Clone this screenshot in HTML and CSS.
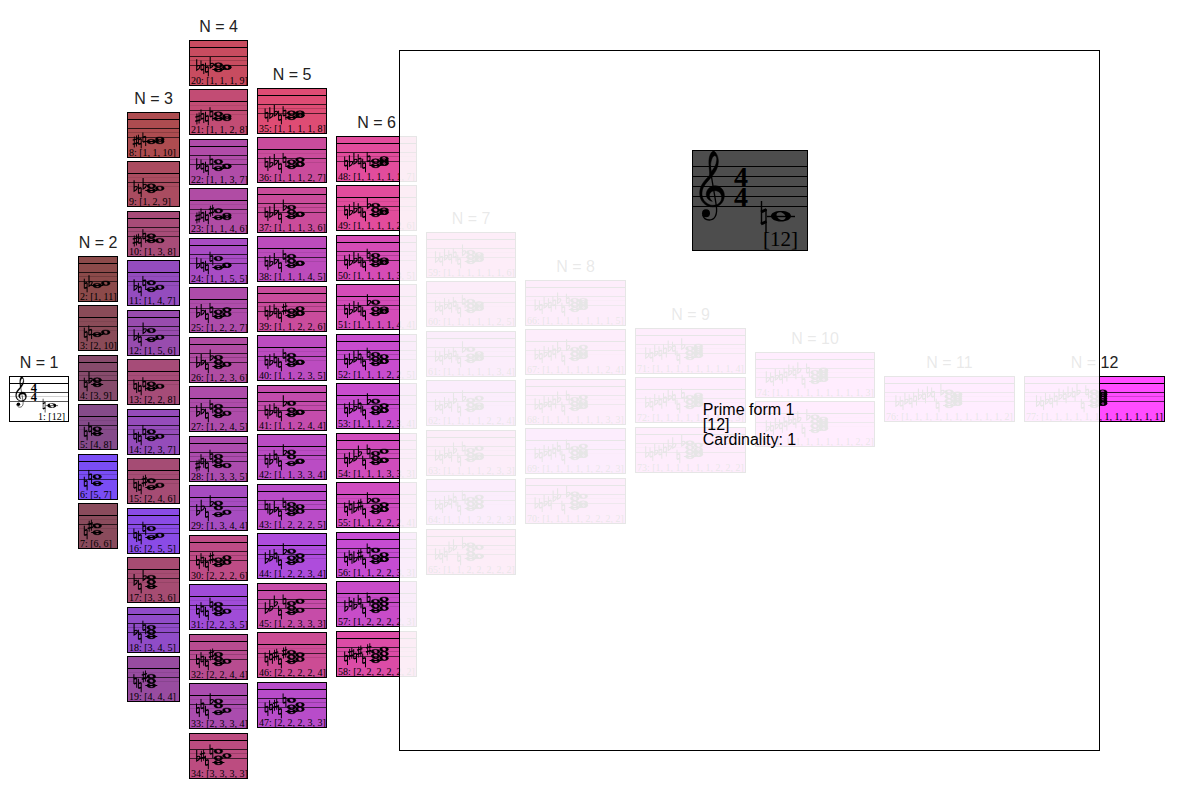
FILE: index.html
```html
<!DOCTYPE html>
<html lang="en">
<head>
<meta charset="utf-8">
<title>Prime forms by cardinality</title>
<link rel="stylesheet" href="styles.css">
</head>
<body>
<svg class="defs" aria-hidden="true">
  <symbol id="flat" viewBox="-3 -9 6 13" overflow="visible">
    <path d="M-1.2-8V3C1 1.8 2 .8 2-.6 2-2.2 0-2.2-1.2-.6" fill="none" stroke="#000" stroke-width="1.1"/>
  </symbol>
  <symbol id="natural" viewBox="-3 -7 6 14" overflow="visible">
    <path d="M-1.4-6.8V2.8M1.4-2.8V6.800" fill="none" stroke="#000" stroke-width="1"/>
    <path d="M-1.4-2.1 1.4-2.8M-1.4 2.8 1.4 2.1" fill="none" stroke="#000" stroke-width="1.500"/>
  </symbol>
  <symbol id="sharp" viewBox="-3 -7 6 14" overflow="visible">
    <path d="M-1-5V6M1.2-6V5" fill="none" stroke="#000" stroke-width=".9"/>
    <path d="M-2.6-1.4 2.8-2.9M-2.6 2.8 2.8 1.3" fill="none" stroke="#000" stroke-width="1.5"/>
  </symbol>
  <symbol id="whole" viewBox="-4 -3 8 6" overflow="visible">
    <path fill-rule="evenodd" stroke="#000" stroke-width=".4" d="M-4.4 0C-4.4-1.5-2.4-2.3 0-2.3S4.4-1.5 4.4 0 2.4 2.3 0 2.3-4.4 1.5-4.4 0ZM-1.9-.5C-1.7.9-.6 1.8.5 1.7 1.7 1.6 2.1.7 1.9-.2 1.6-1.3.6-1.9-.5-1.7-1.5-1.5-2-.9-1.9-.5Z"/>
  </symbol>
  <symbol id="opening" viewBox="0 0 116 101" overflow="visible">
    <g transform="translate(1 0) scale(.3333)">
      <path fill-rule="evenodd" stroke="#000" stroke-width="1.500" d="M48 45C46 20 54 4 62 3 70 6 77 22 76 36 75 60 60 76 46 92 32 107 26 118 27 134 28 152 44 166 60 166 76 166 86 156 86 142 86 130 76 122 66 122 52 122 47 134 50 142 51 148 55 152 58 154 46 152 38 140 40 130 42 116 54 107 66 107 84 107 95 122 94 138 93 157 80 171 60 171 38 171 20 154 20 130 20 108 32 94 48 78 51 75 49 58 48 45ZM54 65C50 42 56 20 64 17 70 16 72 24 71 31 70 45 63 56 54 65Z"/>
      <path d="M51 45C54 80 63 120 70 168 74 196 64 210 49 210 38 210 31 204 29 194" fill="none" stroke="#000" stroke-width="4"/>
      <circle cx="39" cy="190" r="12"/>
    </g>
    <text class="meter" x="49" y="36" text-anchor="middle">4</text>
    <text class="meter" x="49" y="56" text-anchor="middle">4</text>
    <path d="M69.500 51V74M74 59V82" fill="none" stroke="#000" stroke-width="1.400"/>
    <path d="M69 62 74.500 59.500M69 74 74.500 71.500" fill="none" stroke="#000" stroke-width="3"/>
    <path d="M75 66.500H103" stroke="#000" stroke-width="1.400"/>
    <path fill-rule="evenodd" d="M79 66C79 63 83 61 89 61S99 63 99 66 95 71.500 89 71.500 79 69 79 66ZM84.500 65C85 68 88 70 90 70 93 70 94 68 93.500 66.500 93 64 90 62.300 88 62.300 85.500 62.300 84.500 63.600 84.500 65Z"/>
  </symbol>
</svg>

<main class="board" id="board"></main>

<aside class="detail" aria-label="Selected prime form">
  <figure class="preview">
    <svg class="preview-score" viewBox="0 0 114 99" aria-hidden="true">
      <g transform="translate(-1 -1)">
        <path d="M0 16.500H116M0 26.500H116M0 36.500H116M0 46.500H116M0 56.500H116" stroke="#000"/>
        <use href="#opening" width="116" height="101"/>
        <text class="preview-label" x="71" y="96">[12]</text>
      </g>
    </svg>
  </figure>
  <p class="info">Prime form 1<br>[12]<br>Cardinality: 1</p>
</aside>
<script src="board.js"></script>
</body>
</html>
```
FILE: styles.css
```css
body {
  margin: 0;
  background: #fff;
  color: #000;
  font: 16px/18px "Liberation Sans", Arial, sans-serif;
}

.defs {
  position: absolute;
  width: 0;
  height: 0;
}

.board {
  display: flex;
  align-items: flex-start;
  gap: 9px;
  padding: 18px 9px;
}

.column {
  flex: none;
}

.column-title {
  margin: 0 0 4px;
  font-size: 16px;
  font-weight: 400;
  line-height: 18px;
  text-align: center;
  white-space: nowrap;
  color: #222;
}

.card {
  box-sizing: border-box;
  height: 46px;
  margin: 0 0 3px;
  border: 1px solid #000;
  overflow: hidden;
}

.card:nth-of-type(even) {
  margin-bottom: 4px;
}

.score {
  display: block;
  width: 100%;
  height: 34px;
  overflow: visible;
}

.label {
  padding-left: 1px;
  font: 10px/11px "Liberation Serif", "Times New Roman", serif;
  white-space: nowrap;
}

.card-first .label {
  padding-right: 3px;
  text-align: right;
}

.meter {
  font: bold 28px "Liberation Serif", "Times New Roman", serif;
}

.detail {
  position: absolute;
  top: 50px;
  left: 399px;
  box-sizing: border-box;
  display: flex;
  flex-direction: column;
  align-items: center;
  gap: 151px;
  width: 701px;
  height: 701px;
  padding-top: 99px;
  border: 1px solid #000;
  background: rgba(255, 255, 255, 0.9);
}

.preview {
  margin: 0;
  border: 1px solid #000;
  background: #4d4d4d;
}

.preview-score {
  display: block;
  width: 114px;
  height: 99px;
}

.preview-label {
  font: 21px "Liberation Serif", "Times New Roman", serif;
}

.info {
  margin: 0;
  line-height: 15px;
}
```
FILE: board.js
```js
// One line per card: intervals | accidentals from left to right | colour
const columns = [
  { width: 60, cards: ["12||#fff"] },
  { width: 40, cards: [
    "1 11|C Db|#8c4a4a", "2 10|C D|#8a4b58", "3 9|C Eb|#874b6c",
    "4 8|C E|#854b8a", "5 7|C F|#7a4df5", "6 6|C F#|#8a4b5c"] },
  { width: 53, cards: [
    "1 1 10|C# C D|#ad4c50", "1 2 9|Db C Eb|#aa4c60", "1 3 8|C# C E|#a84c78",
    "1 4 7|Db C F|#944cbe", "1 5 6|Db C Gb|#984cae", "2 2 8|D C E|#a64c78",
    "2 3 7|D C F|#954cba", "2 4 6|D C F#|#a54c74", "2 5 5|D C G|#8a4be6",
    "3 3 6|Eb C Gb|#a64c72", "3 4 5|Eb C G|#904cc8", "4 4 4|E C G#|#984ca0"] },
  { width: 59, cards: [
    "1 1 1 9|Db D C Eb|#c84c60", "1 1 2 8|C# D C E|#c24c74", "1 1 3 7|Db D C F|#b04ca8",
    "1 1 4 6|C# D C F#|#b04ca4", "1 1 5 5|Db D C G|#a84cc4", "1 2 2 7|Db Eb C F|#ae4caa",
    "1 2 3 6|Db Eb C Gb|#b04ca2", "1 2 4 5|Db Eb C G|#ae4caa", "1 3 3 5|C# E C G|#ac4cae",
    "1 3 4 4|Db Fb C Ab|#a64cc0", "2 2 2 6|D E C F#|#be4c86", "2 2 3 5|D E C G|#a04cd8",
    "2 2 4 4|D E C G#|#b84c90", "2 3 3 4|D F C Ab|#aa4cae", "3 3 3 3|Eb F# C A|#bc4c80"] },
  { width: 70, cards: [
    "1 1 1 1 8|D Db Eb C E|#de4c74", "1 1 1 2 7|D Db Eb C F|#ca4c9c", "1 1 1 3 6|D Db Eb C Gb|#ca4c9a",
    "1 1 1 4 5|D Db Eb C G|#bc4cbc", "1 1 2 2 6|D Db E C F#|#ca4c9c", "1 1 2 3 5|D Db E C G|#bc4cc0",
    "1 1 2 4 4|D Db E C Ab|#c44cac", "1 1 3 3 4|D Db F C Ab|#ba4cc4", "1 2 2 2 5|F Db Eb C G|#ba4cc8",
    "1 2 2 3 4|Db Eb F C Ab|#ae4cdc", "1 2 3 3 3|Db Eb Gb C A|#c64ca8", "2 2 2 2 4|D E F# C G#|#cc4c94",
    "2 2 2 3 3|D E F# C A|#b84cca"] },
  { width: 81, cards: [
    "1 1 1 1 1 7|D Db Eb E C F|#e24c9c", "1 1 1 1 2 6|D Db Eb E C Gb|#e24c9c",
    "1 1 1 1 3 5|D Db Eb E C G|#d64cb6", "1 1 1 1 4 4|D Db Eb E C Ab|#d44cb8",
    "1 1 1 2 2 5|D Db Eb F C G|#c84cce", "1 1 1 2 3 4|D Db Eb F C Ab|#c84cce",
    "1 1 1 3 3 3|D Db Eb Gb C A|#d04cbc", "1 1 2 2 2 4|D E Db F# C Ab|#d04cc0",
    "1 1 2 2 3 3|D E Db F# C A|#c64cd2", "1 2 2 2 2 3|Db F Eb G C A|#c84cc8",
    "2 2 2 2 2 2|D F# E G# C A#|#dc4ca6"] },
  { width: 90, cards: [
    "1 1 1 1 1 1 6||#e64cb8", "1 1 1 1 1 2 5||#e04cc0", "1 1 1 1 1 3 4||#d84cd0",
    "1 1 1 1 2 2 4||#d44cdc", "1 1 1 1 2 3 3||#e04cc4", "1 1 1 2 2 2 3||#d44ce0",
    "1 1 2 2 2 2 2||#e44cb8"] },
  { width: 101, cards: [
    "1 1 1 1 1 1 1 5||#ec4cd0", "1 1 1 1 1 1 2 4||#ec4cd0", "1 1 1 1 1 1 3 3||#ec4cd0",
    "1 1 1 1 1 2 2 3||#dc4ce4", "1 1 1 1 2 2 2 2||#ec4cd0"] },
  { width: 111, cards: [
    "1 1 1 1 1 1 1 1 4||#f44ce0", "1 1 1 1 1 1 1 2 3||#f04ce4", "1 1 1 1 1 1 2 2 2||#f44ce0"] },
  { width: 120, cards: ["1 1 1 1 1 1 1 1 1 3||#ff4cf0", "1 1 1 1 1 1 1 1 2 2||#ff4cf0"] },
  { width: 131, cards: ["1 1 1 1 1 1 1 1 1 1 2||#ff4cf8"] },
  { width: 141, cards: ["1 1 1 1 1 1 1 1 1 1 1 1||#ff4cff"] }
];

const flatNames = ["C", "Db", "D", "Eb", "E", "F", "Gb", "G", "Ab", "A", "Bb", "B"];
const stepOf = name => "CDEFGAB".indexOf(name[0]);
const heightOf = name => 28.5 - 2.25 * stepOf(name);

function spell(intervals) {
  let pitch = 0;
  const names = intervals.map(i => {
    const name = flatNames[pitch];
    pitch += i;
    return name;
  });
  const bottom = names.shift();
  const top = names.pop();
  return [...names, bottom, top];
}

function staff(row) {
  const lines = row % 2 ? [[11, 1], [15, .08], [20, .7], [24, .1]] : [[6, 1], [15, .75], [19, .18], [24, .65]];
  return lines.map(([y, o]) =>
    `<line x1="0" x2="100%" y1="${y + .5}" y2="${y + .5}" stroke="#000" stroke-opacity="${o}"/>`).join("");
}

function chord(names) {
  const main = 5.1 * names.length + 8;
  let out = "";
  names.forEach((name, i) => {
    const x = main - 7 - (names.length - 1 - i) * 4.5;
    const kind = name[1] === "b" ? "flat" : name[1] === "#" ? "sharp" : "natural";
    const box = kind === "flat" ? [9, 13] : [7, 14];
    out += `<use href="#${kind}" x="${x - 3}" y="${heightOf(name) - box[0]}" width="6" height="${box[1]}"/>`;
  });
  let last = -9;
  [...names].sort((a, b) => stepOf(a) - stepOf(b)).forEach(name => {
    const step = stepOf(name);
    const free = step - last >= 2;
    if (free) last = step;
    const x = free ? main : main + 8.5;
    out += `<use href="#whole" x="${x - 4}" y="${heightOf(name) - 3}" width="8" height="6"/>`;
  });
  return out + `<path d="M${main - 6} 28.500h12" stroke="#000"/>`;
}

let number = 0;
document.getElementById("board").innerHTML = columns.map((column, c) => {
  const cards = column.cards.map((card, row) => {
    const [steps, accidentals, colour] = card.split("|");
    const intervals = steps.split(" ").map(Number);
    number += 1;
    const notes = number === 1
      ? `<use href="#opening" x="2" y="-1" width="52" height="45"/>`
      : chord(accidentals ? accidentals.split(" ") : spell(intervals));
    return `<figure class="card${number === 1 ? " card-first" : ""}" style="background:${colour}">
      <svg class="score" aria-hidden="true">${staff(row)}${notes}</svg>
      <figcaption class="label">${number}: [${intervals.join(", ")}]</figcaption>
    </figure>`;
  }).join("");
  const top = (15 - column.cards.length) * 24;
  return `<section class="column" style="width:${column.width}px;margin-top:${top}px">
    <h2 class="column-title">N = ${c + 1}</h2>${cards}</section>`;
}).join("");
```
